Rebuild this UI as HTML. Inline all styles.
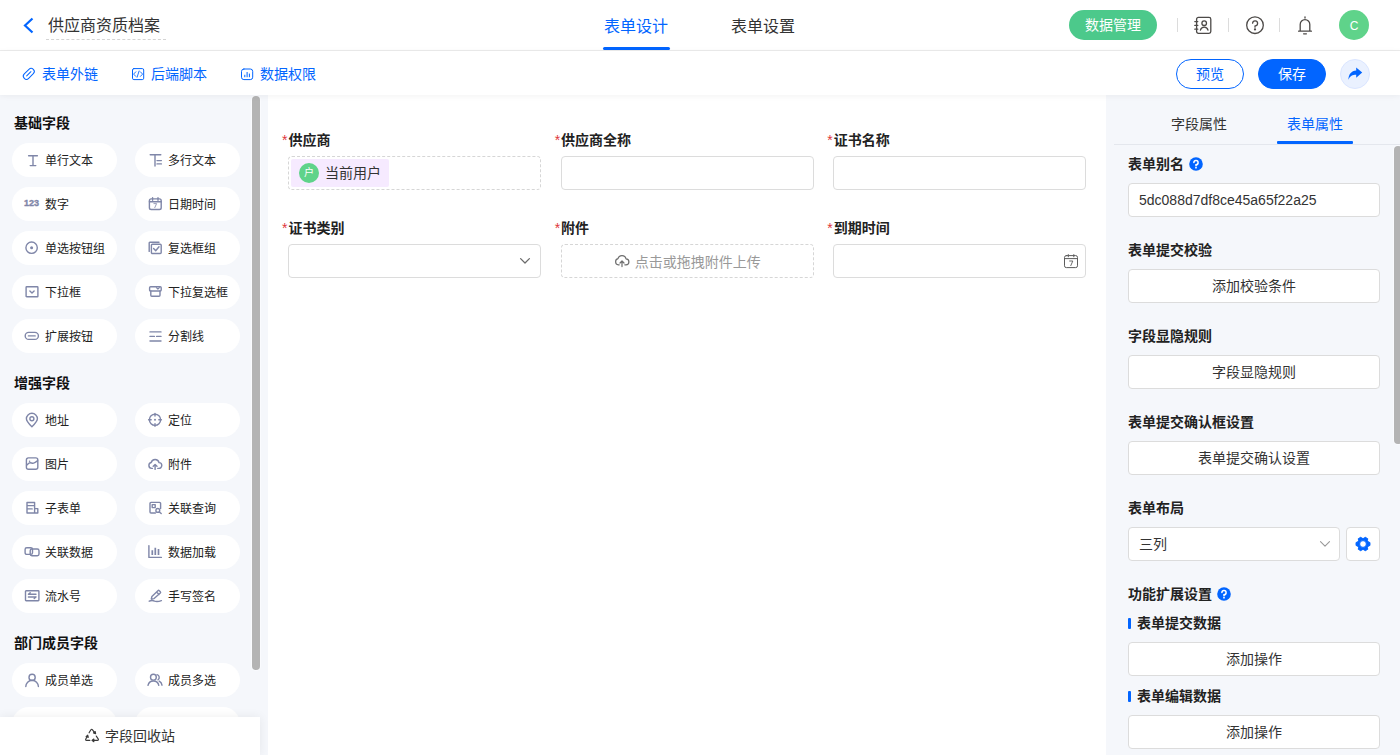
<!DOCTYPE html>
<html lang="zh-CN">
<head>
<meta charset="utf-8">
<title>供应商资质档案</title>
<style>
*{box-sizing:border-box;margin:0;padding:0}
html,body{width:1400px;height:755px;overflow:hidden;background:#fff}
body{font-family:"Liberation Sans","Noto Sans CJK SC",sans-serif;font-size:14px;color:#333;position:relative}
.abs{position:absolute}
svg{display:block}
/* header */
#hdr{position:absolute;left:0;top:0;width:1400px;height:51px;background:#fff;border-bottom:1px solid #ececec}
#title{position:absolute;left:46px;top:12px;width:120px;height:28px;border-bottom:1px dashed #d4d4d4;font-size:16px;line-height:28px;padding-left:2px;color:#333;white-space:nowrap}
.tab{position:absolute;top:14px;height:26px;line-height:26px;font-size:16px;white-space:nowrap;color:#333}
#tabline{position:absolute;left:603px;top:47px;width:67px;height:3px;border-radius:2px;background:#0265ff}
#btn-mgr{position:absolute;left:1069px;top:10px;width:88px;height:30px;border-radius:15px;background:#4cc98b;color:#fff;font-size:14px;line-height:30px;text-align:center}
.sep{position:absolute;top:18px;width:1px;height:14px;background:#dcdcdc}
#avatar{position:absolute;left:1339px;top:10px;width:30px;height:30px;border-radius:50%;background:#5fd38a;color:#fff;font-size:12px;line-height:32px;text-align:center}
/* toolbar */
#bar{position:absolute;left:0;top:51px;width:1400px;height:44px;background:#fff;box-shadow:0 1px 6px rgba(0,0,0,.055);z-index:5}
.lnk{position:absolute;top:14px;height:18px;line-height:18px;font-size:14px;color:#0265ff;white-space:nowrap}
.lnk svg{position:absolute;top:2px}
.pbtn{position:absolute;top:8px;width:68px;height:30px;border-radius:15px;font-size:14px;line-height:28px;text-align:center}
#btn-prev{left:1176px;border:1px solid #0265ff;color:#0265ff;background:#fff}
#btn-save{left:1258px;border:1px solid #0265ff;color:#fff;background:#0265ff}
#btn-share{position:absolute;left:1340px;top:8px;width:30px;height:30px;border-radius:50%;background:#eaf1ff;border:1px solid #dbe6ff}
/* left */
#left{position:absolute;left:0;top:95px;width:268px;height:660px;background:#f5f7fb;overflow:hidden}
#lthumb{position:absolute;left:252px;top:1px;width:8px;height:574px;border-radius:4px;background:#b4b4b4;box-shadow:0 0 0 1px #fafbfe}
.sec{position:absolute;left:14px;font-size:14px;font-weight:bold;color:#111;line-height:20px;white-space:nowrap}
.pill{position:absolute;width:105px;height:34px;border-radius:17px;background:#fff;font-size:12px;line-height:34px;color:#222;white-space:nowrap}
.pill span{position:absolute;left:33px;top:1px}
.pill svg{position:absolute;left:12px;top:9px}
.n123{position:absolute;left:12px;top:-1px;font-size:9px;font-weight:bold;color:#7f86a8;-webkit-text-stroke:.35px #7f86a8;letter-spacing:0;font-family:"Liberation Sans",sans-serif}
.c1{left:12px}.c2{left:135px}
#recycle{position:absolute;left:0;top:622px;width:260px;height:38px;background:#fff;box-shadow:0 0 10px rgba(0,0,0,.07);font-size:14px;line-height:38px;color:#333}
/* canvas */
#canvas{position:absolute;left:268px;top:95px;width:838px;height:660px;background:#fff}
.flabel{position:absolute;font-size:14px;font-weight:bold;color:#222;line-height:18px;white-space:nowrap}
.flabel i{font-style:normal;color:#e0353b;font-weight:normal;margin-right:1px}
.fbox{position:absolute;width:253px;height:34px;border:1px solid #dcdcdc;border-radius:4px;background:#fff}
.fbox.dash{border-style:dashed;border-color:#d6d6d6}
#cshadow{display:none}
.utag{position:absolute;left:2px;top:2px;width:98px;height:28px;border-radius:2px;background:#f6eaff}
.utag b{position:absolute;left:8px;top:4px;width:20px;height:20px;border-radius:50%;background:#5fd38a;color:#fff;font-size:10px;line-height:20px;text-align:center;font-weight:normal}
.utag span{position:absolute;left:34px;top:0;line-height:28px;font-size:14px;color:#333;white-space:nowrap}
.upl{position:absolute;left:0;top:0;width:100%;height:100%;display:flex;align-items:center;justify-content:center;color:#999;font-size:14px;white-space:nowrap}
.upl span{margin-left:5px}
/* right */
#right{position:absolute;left:1106px;top:95px;width:294px;height:660px;background:#f5f7fb;overflow:hidden}
.rtab{position:absolute;top:19px;font-size:14px;line-height:20px;white-space:nowrap}
.rl{position:absolute;left:22px;font-size:14px;font-weight:bold;color:#222;line-height:18px;white-space:nowrap}
.rb{position:absolute;left:22px;width:252px;height:34px;border:1px solid #dcdcdc;border-radius:4px;background:#fff;font-size:14px;line-height:32px;text-align:center;color:#333;white-space:nowrap}
#rline{position:absolute;left:8px;top:49px;width:286px;height:1px;background:#e4e7ed}
#rtabline{position:absolute;left:171px;top:46px;width:76px;height:3px;background:#0265ff;border-radius:1px}
#rthumb{position:absolute;left:288px;top:51px;width:8px;height:298px;border-radius:4px;background:#b4b4b4;box-shadow:0 0 0 1px #fafbfe}
.hq{display:inline-block;vertical-align:-2px;margin-left:5px}
.rl.sub{padding-left:9px}
.rl.sub:before{content:"";position:absolute;left:0;top:4px;width:3px;height:11px;border-radius:1px;background:#0265ff}
</style>
</head>
<body>
<div id="hdr">
  <svg class="abs" style="left:22px;top:17px" width="13" height="17" viewBox="0 0 13 17"><path d="M10.5 1.5 L3 8.5 L10.5 15.5" fill="none" stroke="#0265ff" stroke-width="2.2"/></svg>
  <div id="title">供应商资质档案</div>
  <div class="tab" style="left:604px;color:#0265ff">表单设计</div>
  <div class="tab" style="left:731px">表单设置</div>
  <div id="tabline"></div>
  <div id="btn-mgr">数据管理</div>
  <div class="sep" style="left:1177px"></div>
  <div class="sep" style="left:1228px"></div>
  <div class="sep" style="left:1279px"></div>
  <svg class="abs" style="left:1193px;top:15px" width="20" height="20" viewBox="0 0 20 20" fill="none" stroke="#4d4a48" stroke-width="1.3" stroke-linecap="round" stroke-linejoin="round"><rect x="3.6" y="2.4" width="14.2" height="16" rx="1.8"/><path d="M1.8 6.6H4.8M1.8 10.4H4.8M1.8 14.2H4.8"/><circle cx="11.2" cy="8.2" r="2.3"/><path d="M7.4 15.2A3.9 3.9 0 0 1 15 15.2"/></svg>
  <svg class="abs" style="left:1245px;top:15px" width="20" height="20" viewBox="0 0 20 20" fill="none" stroke="#4d4a48" stroke-width="1.3" stroke-linecap="round" stroke-linejoin="round"><circle cx="10" cy="10.2" r="8.3"/><path d="M7.6 8.2A2.5 2.5 0 1 1 10 10.9V12.2"/><circle cx="10" cy="14.4" r="0.5" fill="#4d4a48"/></svg>
  <svg class="abs" style="left:1295px;top:15px" width="20" height="20" viewBox="0 0 20 20" fill="none" stroke="#4d4a48" stroke-width="1.3" stroke-linecap="round" stroke-linejoin="round"><path d="M3.6 16.2H16.4M5.2 16.2V9.4A4.8 4.8 0 0 1 14.8 9.4V16.2M8.6 18.8H11.4M10 1.8V3"/></svg>
  <div id="avatar">C</div>
</div>
<div id="bar">
  <svg class="abs" style="left:21px;top:15px" width="16" height="16" viewBox="0 0 16 16" fill="none" stroke="#0265ff" stroke-width="1" stroke-linecap="round" stroke-linejoin="round"><g transform="rotate(-45 7.8 7.8)"><rect x="1.4" y="4.7" width="12.8" height="6.2" rx="3.1"/><path d="M4.8 7.8H10.8"/></g></svg>
  <svg class="abs" style="left:130px;top:15px" width="16" height="16" viewBox="0 0 16 16" fill="none" stroke="#0265ff" stroke-width="1" stroke-linecap="round" stroke-linejoin="round"><rect x="2.5" y="2.6" width="11.2" height="11" rx="1.4"/><path d="M5.8 5.8L3.6 8.1L5.8 10.4M10.4 5.8L12.6 8.1L10.4 10.4M9.1 5L7.1 11.2" stroke-width=".9"/></svg>
  <svg class="abs" style="left:239px;top:15px" width="16" height="16" viewBox="0 0 16 16" fill="none" stroke="#0265ff" stroke-width="1" stroke-linecap="round" stroke-linejoin="round"><rect x="2.5" y="3" width="11.2" height="10.6" rx="2.4"/><path d="M5.8 10.8V9.2M8.1 10.8V6.4M10.4 10.8V8"/></svg>
  <div class="lnk" style="left:42px">表单外链</div>
  <div class="lnk" style="left:151px">后端脚本</div>
  <div class="lnk" style="left:260px">数据权限</div>
  <div class="pbtn" id="btn-prev">预览</div>
  <div class="pbtn" id="btn-save">保存</div>
  <div id="btn-share"><svg class="abs" style="left:6px;top:6px" width="16" height="16" viewBox="0 0 16 16"><path d="M9.2 1.4L15.2 6.6L9.2 11.8V8.8C5.6 8.8 3 10 1.4 13.8C1.4 8.4 4.4 4.6 9.2 4.4Z" fill="#0265ff"/></svg></div>
</div>
<div id="left">
  <div id="lthumb"></div>
  <div class="sec" style="top:18px">基础字段</div>
  <div class="pill c1" style="top:48px"><svg width="16" height="16" viewBox="0 0 16 16" fill="none" stroke="#7f86a8" stroke-width="1.4" stroke-linecap="round" stroke-linejoin="round"><path d="M4.6 3.8H13.4M9 3.8V13.6M6.2 13.6H11.8"/></svg><span>单行文本</span></div>
  <div class="pill c2" style="top:48px"><svg width="16" height="16" viewBox="0 0 16 16" fill="none" stroke="#7f86a8" stroke-width="1.4" stroke-linecap="round" stroke-linejoin="round"><path d="M3.2 2.7H13.8M8 2.7V14M10 8.6H14.4M10 11.9H14.4"/></svg><span>多行文本</span></div>
  <div class="pill c1" style="top:92px"><b class="n123">123</b><span>数字</span></div>
  <div class="pill c2" style="top:92px"><svg width="16" height="16" viewBox="0 0 16 16" fill="none" stroke="#7f86a8" stroke-width="1.4" stroke-linecap="round" stroke-linejoin="round"><rect x="2.4" y="2.9" width="11.8" height="10.6" rx="1.8"/><path d="M2.4 5.7H14.2M5.6 1.8V4.2M11 1.8V4.2"/><path d="M6.9 7.6H9.6L7.8 11.6" stroke-width="1" opacity=".8"/></svg><span>日期时间</span></div>
  <div class="pill c1" style="top:136px"><svg width="16" height="16" viewBox="0 0 16 16" fill="none" stroke="#7f86a8" stroke-width="1.4" stroke-linecap="round" stroke-linejoin="round"><circle cx="7.6" cy="7.7" r="5.7"/><circle cx="7.6" cy="7.7" r="1.5" fill="#7f86a8" stroke="none"/></svg><span>单选按钮组</span></div>
  <div class="pill c2" style="top:136px"><svg width="16" height="16" viewBox="0 0 16 16" fill="none" stroke="#7f86a8" stroke-width="1.4" stroke-linecap="round" stroke-linejoin="round"><path d="M2.2 11.4V2.8A.6.6 0 0 1 2.8 2.2H12"/><rect x="4.4" y="4.3" width="9.8" height="9.2" rx="1"/><path d="M6.6 8.6L8.7 10.8L12 6.8"/></svg><span>复选框组</span></div>
  <div class="pill c1" style="top:180px"><svg width="16" height="16" viewBox="0 0 16 16" fill="none" stroke="#7f86a8" stroke-width="1.4" stroke-linecap="round" stroke-linejoin="round"><rect x="2.1" y="2.8" width="11.8" height="10" rx=".6"/><path d="M5.9 6.9L8 8.9L10.1 6.9"/></svg><span>下拉框</span></div>
  <div class="pill c2" style="top:180px"><svg width="16" height="16" viewBox="0 0 16 16" fill="none" stroke="#7f86a8" stroke-width="1.4" stroke-linecap="round" stroke-linejoin="round"><rect x="2.6" y="2.8" width="11.6" height="4.2" rx="1"/><path d="M3.8 7V11.2A1 1 0 0 0 4.8 12.2H12A1 1 0 0 0 13 11.2V7"/><path d="M9.4 3.6L10.9 5.2L12.4 3.6" stroke-width="1.1"/></svg><span>下拉复选框</span></div>
  <div class="pill c1" style="top:224px"><svg width="16" height="16" viewBox="0 0 16 16" fill="none" stroke="#7f86a8" stroke-width="1.4" stroke-linecap="round" stroke-linejoin="round"><rect x="1.2" y="4.4" width="13.2" height="7" rx="3.5"/><path d="M4.4 7.9H11.2"/></svg><span>扩展按钮</span></div>
  <div class="pill c2" style="top:224px"><svg width="16" height="16" viewBox="0 0 16 16" fill="none" stroke="#7f86a8" stroke-width="1.4" stroke-linecap="round" stroke-linejoin="round"><path d="M3 3.9H14M3 13H14M3 8.4H7.4M9.6 8.4H14"/></svg><span>分割线</span></div>
  <div class="sec" style="top:278px">增强字段</div>
  <div class="pill c1" style="top:308px"><svg width="16" height="16" viewBox="0 0 16 16" fill="none" stroke="#7f86a8" stroke-width="1.4" stroke-linecap="round" stroke-linejoin="round"><path d="M7.9 14.8C4.6 11.6 2.4 9.4 2.4 6.8A5.5 5.5 0 0 1 13.4 6.8C13.4 9.4 11.2 11.6 7.9 14.8Z"/><circle cx="7.9" cy="6.8" r="2"/></svg><span>地址</span></div>
  <div class="pill c2" style="top:308px"><svg width="16" height="16" viewBox="0 0 16 16" fill="none" stroke="#7f86a8" stroke-width="1.4" stroke-linecap="round" stroke-linejoin="round"><circle cx="8" cy="7.8" r="5.6"/><path d="M8 1.4V4M8 11.6V14.2M1.6 7.8H4.2M11.8 7.8H14.4"/><circle cx="8" cy="7.8" r="1" fill="#7f86a8" stroke="none"/></svg><span>定位</span></div>
  <div class="pill c1" style="top:352px"><svg width="16" height="16" viewBox="0 0 16 16" fill="none" stroke="#7f86a8" stroke-width="1.4" stroke-linecap="round" stroke-linejoin="round"><rect x="2.4" y="1.9" width="11.4" height="11.4" rx="2"/><path d="M2.6 9.2C4 8.2 4.8 6.7 6 6.7C7.4 6.7 8.2 7.5 9.6 7.1C11 6.7 12.4 5.6 13.6 4.7"/><circle cx="5.6" cy="5.3" r="0.8" fill="#7f86a8" stroke="none"/></svg><span>图片</span></div>
  <div class="pill c2" style="top:352px"><svg width="16" height="16" viewBox="0 0 16 16" fill="none" stroke="#7f86a8" stroke-width="1.4" stroke-linecap="round" stroke-linejoin="round"><path d="M5.4 12.4H4.6A3 3 0 0 1 4.2 6.5A4 4 0 0 1 12 6.6A2.9 2.9 0 0 1 11.8 12.4H10.8"/><path d="M8.1 13.4V8.6M6.2 10.2L8.1 8.4L10 10.2"/></svg><span>附件</span></div>
  <div class="pill c1" style="top:396px"><svg width="16" height="16" viewBox="0 0 16 16" fill="none" stroke="#7f86a8" stroke-width="1.4" stroke-linecap="round" stroke-linejoin="round"><path d="M3 2.5H10.6V13H3ZM3 5.6H10.6M3 8.9H8.2M10.6 8.6H13.8V13H10.6"/></svg><span>子表单</span></div>
  <div class="pill c2" style="top:396px"><svg width="16" height="16" viewBox="0 0 16 16" fill="none" stroke="#7f86a8" stroke-width="1.4" stroke-linecap="round" stroke-linejoin="round"><path d="M13.6 8.6V3.4A1 1 0 0 0 12.6 2.4H4A1 1 0 0 0 3 3.4V12A1 1 0 0 0 4 13H8.4"/><rect x="5.2" y="4.6" width="3" height="3"/><circle cx="10.8" cy="10.4" r="1.9"/><path d="M12.3 11.9L14.2 13.6"/></svg><span>关联查询</span></div>
  <div class="pill c1" style="top:440px"><svg width="16" height="16" viewBox="0 0 16 16" fill="none" stroke="#7f86a8" stroke-width="1.4" stroke-linecap="round" stroke-linejoin="round"><rect x="1.1" y="3.8" width="7.4" height="6.6" rx="1.7"/><rect x="6.2" y="5" width="8.8" height="6.8" rx="1.7"/></svg><span>关联数据</span></div>
  <div class="pill c2" style="top:440px"><svg width="16" height="16" viewBox="0 0 16 16" fill="none" stroke="#7f86a8" stroke-width="1.4" stroke-linecap="round" stroke-linejoin="round"><path d="M1.9 1.6V13.4H14.4"/><path d="M5.3 11V6.2M8.3 11V3.8M11.5 11V5" stroke-width="1.7" stroke-linecap="butt"/></svg><span>数据加载</span></div>
  <div class="pill c1" style="top:484px"><svg width="16" height="16" viewBox="0 0 16 16" fill="none" stroke="#7f86a8" stroke-width="1.4" stroke-linecap="round" stroke-linejoin="round"><rect x="1.5" y="2.7" width="13.4" height="10" rx="0.6"/><path d="M4.4 6.3H12M6.2 4.7L4.4 6.3M12 9H4.4M10.2 10.6L12 9"/></svg><span>流水号</span></div>
  <div class="pill c2" style="top:484px"><svg width="16" height="16" viewBox="0 0 16 16" fill="none" stroke="#7f86a8" stroke-width="1.4" stroke-linecap="round" stroke-linejoin="round"><path d="M4.3 11L4.9 8.4L10.9 2.7A1 1 0 0 1 12.3 2.7L13.3 3.7A1 1 0 0 1 13.3 5.1L7.1 10.6ZM9.6 4L12 6.4M2.2 13.2C4.4 12.2 6 12.4 7.6 13.1C9.6 13.9 12 13.5 14.4 12.6"/></svg><span>手写签名</span></div>
  <div class="sec" style="top:538px">部门成员字段</div>
  <div class="pill c1" style="top:568px"><svg width="16" height="16" viewBox="0 0 16 16" fill="none" stroke="#7f86a8" stroke-width="1.4" stroke-linecap="round" stroke-linejoin="round"><circle cx="8.1" cy="5.4" r="3.1"/><path d="M1.8 14.6A6.3 6.3 0 0 1 14.4 14.6"/></svg><span>成员单选</span></div>
  <div class="pill c2" style="top:568px"><svg width="16" height="16" viewBox="0 0 16 16" fill="none" stroke="#7f86a8" stroke-width="1.4" stroke-linecap="round" stroke-linejoin="round"><circle cx="6.4" cy="5.2" r="2.9"/><path d="M1 13.4A5.5 5.5 0 0 1 11.8 13.4"/><path d="M10 2.6A2.9 2.9 0 0 1 11 7.8M12.2 9.2A5.4 5.4 0 0 1 15 13.2"/></svg><span>成员多选</span></div>
  <div class="pill c1" style="top:612px"><svg width="16" height="16" viewBox="0 0 16 16" fill="none" stroke="#7f86a8" stroke-width="1.4" stroke-linecap="round" stroke-linejoin="round"><circle cx="8.1" cy="5.4" r="3.1"/><path d="M1.8 14.6A6.3 6.3 0 0 1 14.4 14.6"/></svg><span>部门单选</span></div>
  <div class="pill c2" style="top:612px"><svg width="16" height="16" viewBox="0 0 16 16" fill="none" stroke="#7f86a8" stroke-width="1.4" stroke-linecap="round" stroke-linejoin="round"><circle cx="6.4" cy="5.2" r="2.9"/><path d="M1 13.4A5.5 5.5 0 0 1 11.8 13.4"/><path d="M10 2.6A2.9 2.9 0 0 1 11 7.8M12.2 9.2A5.4 5.4 0 0 1 15 13.2"/></svg><span>部门多选</span></div>
  <div id="recycle"><svg class="abs" style="left:84px;top:11px" width="16" height="16" viewBox="0 0 16 16" fill="none" stroke="#3a3a3a" stroke-width="1.15" stroke-linecap="round" stroke-linejoin="round"><path d="M5.1 4.8L6.9 1.8Q7.7 0.7 8.5 1.8L10.6 4.6"/><path d="M11.6 5.6L9.5 4.9L11.2 3.5Z" fill="#3a3a3a"/><path d="M12.3 8.1L14.3 11.1Q14.8 12.35 13.5 12.35H9.4"/><path d="M8 12.35L9.8 11L9.8 13.7Z" fill="#3a3a3a"/><path d="M5.9 12.35H2.5Q1.2 12.35 1.8 11.1L3.1 8.7"/><path d="M3.7 7.2L4.3 9.3L2.1 8.6Z" fill="#3a3a3a"/></svg><span class="abs" style="left:105px;top:0">字段回收站</span></div>
</div>
<div id="canvas">
  <div id="cshadow"></div>
  <div class="flabel" style="left:14px;top:36px"><i>*</i>供应商</div><div class="fbox dash" style="left:20px;top:61px"><div class="utag"><b>户</b><span>当前用户</span></div></div>
  <div class="flabel" style="left:286.67px;top:36px"><i>*</i>供应商全称</div><div class="fbox" style="left:292.67px;top:61px"></div>
  <div class="flabel" style="left:559.33px;top:36px"><i>*</i>证书名称</div><div class="fbox" style="left:565.33px;top:61px"></div>
  <div class="flabel" style="left:14px;top:124px"><i>*</i>证书类别</div><div class="fbox" style="left:20px;top:149px"><svg class="abs" style="left:229px;top:11px" width="14" height="10" viewBox="0 0 14 10" fill="none" stroke="#6b6b6b" stroke-width="1.3" stroke-linecap="round" stroke-linejoin="round"><path d="M2.6 2.6L7 7L11.4 2.6"/></svg></div>
  <div class="flabel" style="left:286.67px;top:124px"><i>*</i>附件</div><div class="fbox dash" style="left:292.67px;top:149px"><div class="upl"><svg width="16" height="14" viewBox="0 0 16 14" fill="none" stroke="#6e6e6e" stroke-width="1.2" stroke-linecap="round" stroke-linejoin="round"><path d="M5.2 10.8H4.4A3.1 3.1 0 0 1 4 4.7A4.1 4.1 0 0 1 12 4.8A3 3 0 0 1 11.8 10.8H10.8"/><path d="M8 12.6V7.2M6 9L8 7L10 9"/></svg><span>点击或拖拽附件上传</span></div></div>
  <div class="flabel" style="left:559.33px;top:124px"><i>*</i>到期时间</div><div class="fbox" style="left:565.33px;top:149px"><svg class="abs" style="left:229px;top:9px" width="16" height="16" viewBox="0 0 16 16" fill="none" stroke="#5c5c5c" stroke-width="1" stroke-linecap="round" stroke-linejoin="round"><rect x="1.5" y="1.6" width="13" height="12" rx="1.8"/><path d="M1.5 4.6H14.5M5.3 0.6V2.8M10.8 0.6V2.8"/><path d="M6.6 7H9.8L7.8 11.6" stroke-width=".9"/></svg></div>
</div>
<div id="right">
  <div class="rtab" style="left:65px">字段属性</div>
  <div class="rtab" style="left:181px;color:#0265ff">表单属性</div>
  <div id="rline"></div><div id="rtabline"></div><div id="rthumb"></div>
  <div class="rl" style="top:60px">表单别名<svg class="hq" width="14" height="14" viewBox="0 0 14 14"><circle cx="7" cy="7" r="6.8" fill="#0265ff"/><path d="M4.9 5.5A2.1 2.1 0 1 1 7 7.7V8.7" fill="none" stroke="#fff" stroke-width="1.5" stroke-linecap="round"/><circle cx="7" cy="10.7" r=".9" fill="#fff"/></svg></div>
  <div class="rb" style="top:88px;text-align:left;padding-left:10px">5dc088d7df8ce45a65f22a25</div>
  <div class="rl" style="top:146px">表单提交校验</div>
  <div class="rb" style="top:174px">添加校验条件</div>
  <div class="rl" style="top:232px">字段显隐规则</div>
  <div class="rb" style="top:260px">字段显隐规则</div>
  <div class="rl" style="top:318px">表单提交确认框设置</div>
  <div class="rb" style="top:346px">表单提交确认设置</div>
  <div class="rl" style="top:404px">表单布局</div>
  <div class="rb" style="top:432px;width:212px;text-align:left;padding-left:10px">三列<svg class="abs" style="left:190px;top:12px" width="12" height="8" viewBox="0 0 12 8" fill="none" stroke="#999" stroke-width="1.1" stroke-linecap="round" stroke-linejoin="round"><path d="M1.5 1.6L6 6.1L10.5 1.6"/></svg></div>
  <div class="rb" style="top:432px;left:240px;width:34px"><svg class="abs" style="left:8px;top:8px" width="16" height="16" viewBox="0 0 16 16"><path fill="#0265ff" stroke="#0265ff" stroke-width="1" stroke-linejoin="round" fill-rule="evenodd" d="M13.32 5.96L14.94 6.52L14.94 9.48L13.32 10.04L12.43 11.59L12.75 13.28L10.19 14.75L8.89 13.63L7.11 13.63L5.81 14.75L3.25 13.28L3.57 11.59L2.68 10.04L1.06 9.48L1.06 6.52L2.68 5.96L3.57 4.41L3.25 2.72L5.81 1.25L7.11 2.37L8.89 2.37L10.19 1.25L12.75 2.72L12.43 4.41ZM8 4.6A3.4 3.4 0 1 0 8 11.4A3.4 3.4 0 1 0 8 4.6Z"/></svg></div>
  <div class="rl" style="top:490px">功能扩展设置<svg class="hq" width="14" height="14" viewBox="0 0 14 14"><circle cx="7" cy="7" r="6.8" fill="#0265ff"/><path d="M4.9 5.5A2.1 2.1 0 1 1 7 7.7V8.7" fill="none" stroke="#fff" stroke-width="1.5" stroke-linecap="round"/><circle cx="7" cy="10.7" r=".9" fill="#fff"/></svg></div>
  <div class="rl sub" style="top:519px">表单提交数据</div>
  <div class="rb" style="top:547px">添加操作</div>
  <div class="rl sub" style="top:592px">表单编辑数据</div>
  <div class="rb" style="top:620px">添加操作</div>
</div>
</body>
</html>
